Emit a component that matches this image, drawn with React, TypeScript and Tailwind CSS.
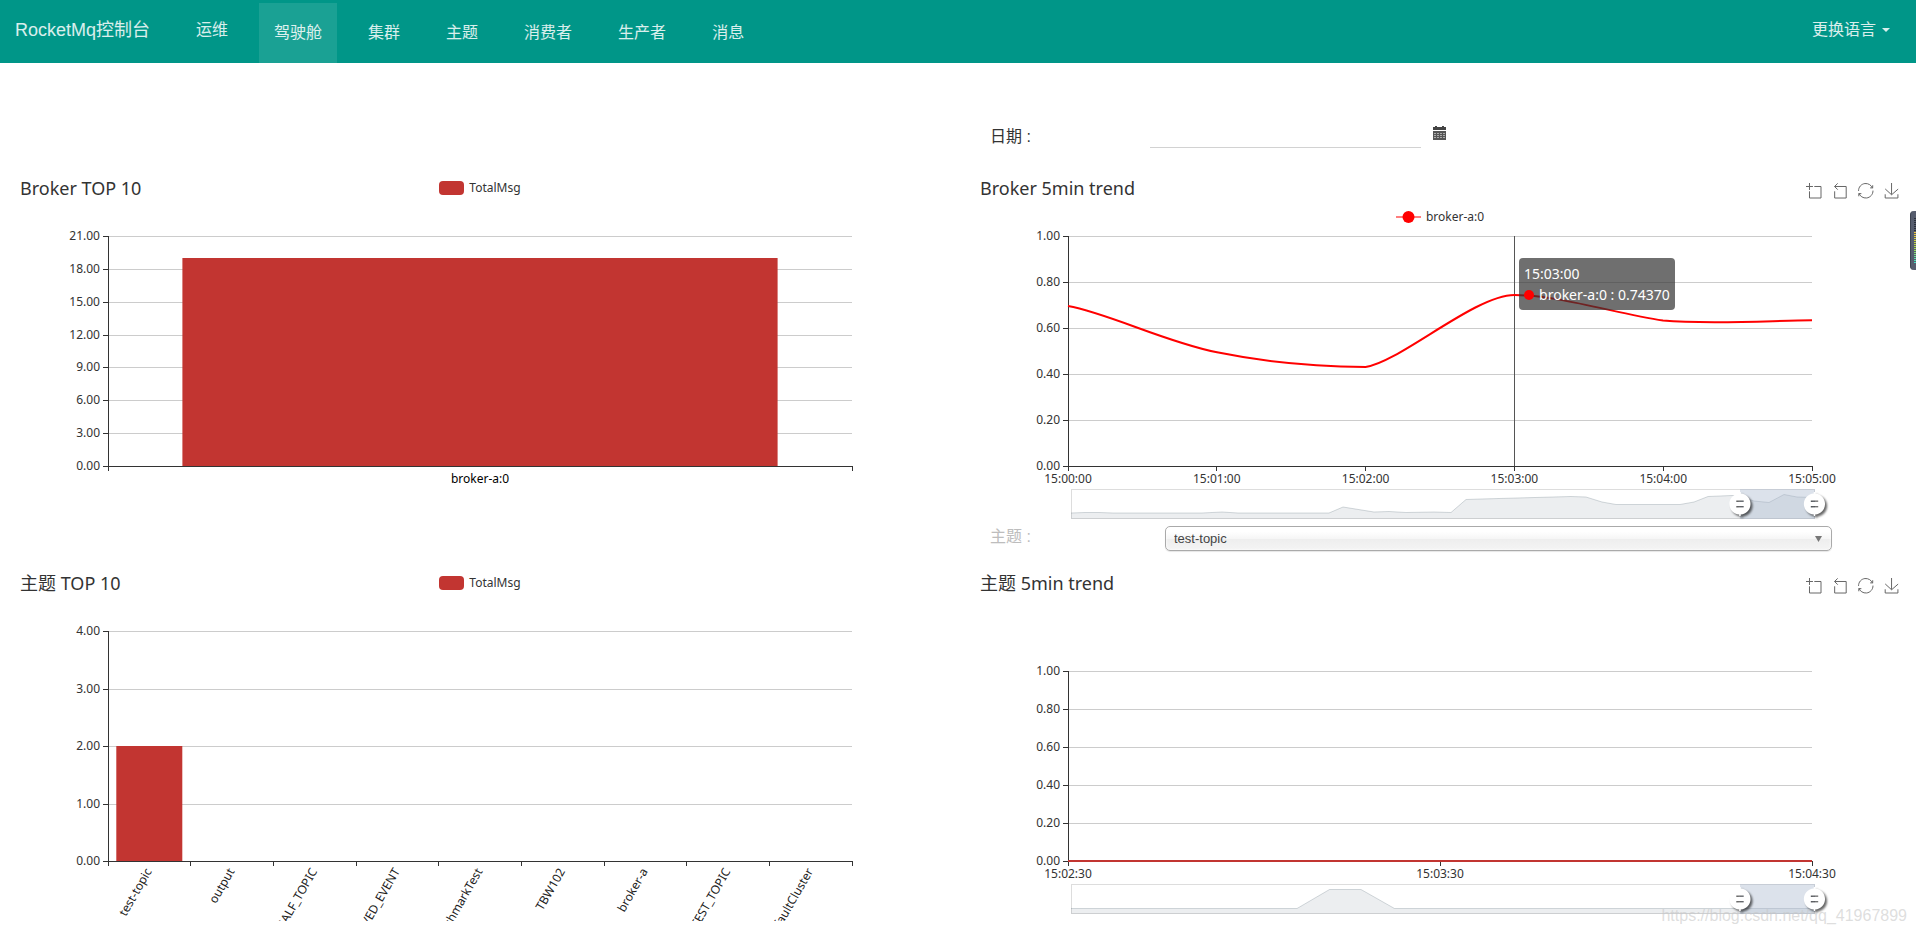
import type { ReactNode } from "react";

const chartFont = "font-['Noto_Sans','Noto_Sans_CJK_SC',sans-serif]";

const NAV = ["驾驶舱", "集群", "主题", "消费者", "生产者", "消息"];

const TOOLS = [
    { label: "区域缩放", d: "M0,13.5h26.9 M13.5,26.9V0 M32.1,13.5H58V58H13.5 V32.1" },
    { label: "缩放还原", d: "M22,1.4L9.9,13.5l12.3,12.3 M10.3,13.5H54.9v44.6 H10.3v-26" },
    {
        label: "还原",
        d: "M47,18.9h9.8V8.7 M56.3,20.1 C52.1,9,40.5,0.6,26.8,2.1C12.6,3.7,1.6,16.2,2.1,30.6 M13,41.1H3.1v10.2 M3.7,39.9c4.2,11.1,15.8,19.5,29.5,18 c14.2-1.6,25.2-14.1,24.7-28.5",
    },
    { label: "保存为图片", d: "M4.7,22.9L29.3,45.5L54.7,23.4M4.6,43.6L4.6,58L53.8,58L53.8,43.6M29.2,45.1L29.2,0" },
];

// plot area inside the 930 x 350 chart, the drawing starts below the 50px header
const LEFT = 93;
const RIGHT = 837;
const BOTTOM = 290;

const TOPICS = [
    "test-topic",
    "output",
    "RMQ_SYS_TRANS_HALF_TOPIC",
    "OFFSET_MOVED_EVENT",
    "BenchmarkTest",
    "TBW102",
    "broker-a",
    "SELF_TEST_TOPIC",
    "DefaultCluster",
];

function Toolbox() {
    return (
        <div className="flex gap-[11px] pt-[7px] pr-[6px]">
            {TOOLS.map((tool) => (
                <button key={tool.label} type="button" aria-label={tool.label} className="h-[15px] w-[15px] cursor-pointer">
                    <svg viewBox="0 0 58 58" className="block h-full w-full overflow-visible" fill="none" stroke="#666">
                        <path d={tool.d} vectorEffect="non-scaling-stroke" />
                    </svg>
                </button>
            ))}
        </div>
    );
}

function BarLegend() {
    return (
        <div className="flex h-[24px] items-center gap-[5px] text-xs text-[#333]">
            <span className="h-[14px] w-[25px] rounded-[4px] bg-[#c23531]" />
            TotalMsg
        </div>
    );
}

function LineLegend() {
    return (
        <div className="flex items-center justify-center gap-[5px] pt-[3px] text-xs text-[#333]">
            <svg width="25" height="14" viewBox="0 0 25 14">
                <path d="M0 7H25" stroke="#ff0000" strokeWidth="2" opacity="0.5" />
                <circle cx="12.5" cy="7" r="6" fill="#ff0000" />
            </svg>
            broker-a:0
        </div>
    );
}

type ChartProps = {
    title: string;
    legend?: ReactNode;
    subLegend?: ReactNode;
    tools?: boolean;
    overlay?: ReactNode;
    children: ReactNode;
};

function Chart({ title, legend, subLegend, tools, overlay, children }: ChartProps) {
    return (
        <section className={`min-w-0 ${chartFont}`}>
            <div className="grid h-[30px] grid-cols-3 items-start">
                <h2 className="pl-[5px] text-lg leading-6 whitespace-nowrap text-[#333]">{title}</h2>
                <div className="flex justify-center">{legend}</div>
                <div className="flex justify-end">{tools && <Toolbox />}</div>
            </div>
            <div className="h-[20px]">{subLegend}</div>
            <div className="relative">
                <svg viewBox="0 50 930 300" className="block h-auto w-full" fontSize="12">
                    {children}
                </svg>
                {overlay}
            </div>
        </section>
    );
}

function YAxis({ top, max, step }: { top: number; max: number; step: number }) {
    const count = Math.round(max / step);
    const ticks = Array.from({ length: count + 1 }, (_, i) => i);
    return (
        <g>
            {ticks.map((i) => {
                const y = Math.round(BOTTOM - ((BOTTOM - top) * i) / count) + 0.5;
                return (
                    <g key={i}>
                        <path d={`M${LEFT} ${y}H${RIGHT}`} stroke="#ccc" />
                        <path d={`M${LEFT - 5} ${y}H${LEFT}`} stroke="#333" />
                        <text x={LEFT - 8} y={y + 3} textAnchor="end" fill="#333">
                            {(i * step).toFixed(2)}
                        </text>
                    </g>
                );
            })}
            <path d={`M${LEFT + 0.5} ${top}V${BOTTOM + 1}`} stroke="#333" />
        </g>
    );
}

function XAxis({ ticks }: { ticks: number }) {
    return (
        <g stroke="#333">
            <path d={`M${LEFT} ${BOTTOM + 0.5}H${RIGHT + 1}`} />
            {Array.from({ length: ticks + 1 }, (_, i) => {
                const x = Math.floor(LEFT + ((RIGHT - LEFT) * i) / ticks) + 0.5;
                return <path key={i} d={`M${x} ${BOTTOM}v5`} />;
            })}
        </g>
    );
}

function TimeLabels({ labels }: { labels: string[] }) {
    return (
        <g fill="#333" textAnchor="middle">
            {labels.map((label, i) => (
                <text key={label} x={LEFT + ((RIGHT - LEFT) * i) / (labels.length - 1)} y={BOTTOM + 17}>
                    {label}
                </text>
            ))}
        </g>
    );
}

function DataZoom({ points }: { points: string }) {
    return (
        <g>
            <rect x="96.5" y="313.5" width="743" height="29" fill="#fff" stroke="#ddd" />
            <polygon points={`96,343 ${points} 840,343`} fill="#2f4554" fillOpacity="0.09" />
            <polyline points={points} fill="none" stroke="#2f4554" strokeOpacity="0.2" />
            <rect x="765" y="313" width="75" height="30" fill="#a7b7cc" fillOpacity="0.4" />
            {[765, 839.5].map((x) => (
                <g key={x} className="drop-shadow-[2px_2px_1px_rgba(0,0,0,0.6)]">
                    <path
                        transform={`translate(${x} 328) scale(1.12) translate(-10 -21.3)`}
                        fill="#fff"
                        d="M10.7,11.9v-1.3H9.3v1.3c-4.9,0.3-8.8,4.4-8.8,9.4c0,5,3.9,9.1,8.8,9.4v1.3h1.3v-1.3c4.9-0.3,8.8-4.4,8.8-9.4C19.5,16.3,15.6,12.2,10.7,11.9z M13.3,24.4H6.7V23h6.6V24.4z M13.3,19.6H6.7v-1.4h6.6V19.6z"
                    />
                </g>
            ))}
        </g>
    );
}

function Tooltip() {
    return (
        <div className="absolute top-[32px] left-[58.5%] rounded bg-[rgba(50,50,50,0.7)] p-[5px] text-sm leading-[21px] whitespace-nowrap text-white">
            <div>15:03:00</div>
            <div className="flex items-center gap-[5px]">
                <span className="h-[10px] w-[10px] rounded-full bg-[#ff0000]" />
                broker-a:0 : 0.74370
            </div>
        </div>
    );
}

function Navbar() {
    return (
        <header className="flex h-[63px] items-start justify-between bg-[#009688] pr-[26px] pl-[15px] text-base text-white/85">
            <div className="flex items-start">
                <a href="#" className="flex h-[60px] items-center text-lg whitespace-nowrap">RocketMq控制台</a>
                <nav className="ml-[31px] flex items-start gap-[16px] whitespace-nowrap">
                    <a href="#ops" className="flex h-[60px] items-center px-[15px]">运维</a>
                    <ul className="flex gap-[16px] pt-[3px]">
                        {NAV.map((item, i) => (
                            <li key={item}>
                                <a
                                    href={`#${item}`}
                                    className={`flex h-[60px] items-center px-[15px] ${i === 0 ? "bg-white/10" : ""}`}
                                >
                                    {item}
                                </a>
                            </li>
                        ))}
                    </ul>
                </nav>
            </div>
            <button type="button" className="flex h-[60px] cursor-pointer items-center gap-[6px] whitespace-nowrap">
                更换语言
                <svg width="8" height="4" viewBox="0 0 8 4" fill="currentColor">
                    <path d="M0 0H8L4 4Z" />
                </svg>
            </button>
        </header>
    );
}

function DateField() {
    return (
        <div className="flex h-[113px] items-start pt-[57px] pl-[15px]">
            <label htmlFor="date" className="w-[160px] leading-[34px] text-[#333]">日期 :</label>
            <input id="date" type="text" className="h-[28px] w-[271px] border-b border-[#d2d2d2] bg-transparent outline-none" />
            <button type="button" aria-label="选择日期" className="ml-[12px] pt-[6px]">
                <svg width="13" height="14" viewBox="0 0 13 14">
                    <path d="M0 1H2V0H4V1H9V0H11V1H13V4H0Z" fill="#444" />
                    <path d="M0 5H13V14H0Z" fill="#555" />
                    <path d="M1 7.5H12M1 9.5H12M1 11.5H12" stroke="#aaa" strokeDasharray="2 1" />
                </svg>
            </button>
        </div>
    );
}

function TopicField() {
    return (
        <div className="flex h-[45px] items-start pr-[73px] pl-[15px]">
            <label htmlFor="topic" className="w-[175px] leading-[22px] text-[#bdbdbd]">主题 :</label>
            <div className="relative flex-1">
                <select
                    id="topic"
                    className="block h-[25px] w-full appearance-none rounded-[5px] border border-[#aaa] bg-[linear-gradient(#fff_20%,#f6f6f6_50%,#eee_52%,#f4f4f4_100%)] pl-2 text-[13px] text-[#444] shadow-[0_0_3px_#fff_inset,0_1px_1px_rgba(0,0,0,0.1)]"
                >
                    <option>test-topic</option>
                </select>
                <svg width="7" height="6" viewBox="0 0 7 6" className="pointer-events-none absolute top-[10px] right-[10px]" fill="#777">
                    <path d="M0 0H7L3.5 6Z" />
                </svg>
            </div>
        </div>
    );
}

function SideMeter() {
    return (
        <div className="fixed top-[211px] right-0 flex h-[59px] w-[6px] flex-col justify-center rounded-l border-l border-[#3d4350] bg-[#565d6e] pl-[3px]">
            <span className="h-[14px] bg-[repeating-linear-gradient(#2b303b_0_1px,#565d6e_1px_2px)]" />
            <span className="h-[32px] bg-[repeating-linear-gradient(transparent_0_1px,#565d6e_1px_2px),linear-gradient(#f5c63c,#a5dc4a_50%,#35e0d0)]" />
        </div>
    );
}

export default function App() {
    const band = (RIGHT - LEFT) / TOPICS.length;

    return (
        <div className="relative min-h-screen bg-white pb-[13px] font-['Liberation_Sans','Noto_Sans_CJK_SC',sans-serif]">
            <Navbar />
            <main className="grid grid-cols-2 gap-x-[30px] pr-[11px] pl-[15px]">
                <div />
                <DateField />

                <Chart title="Broker TOP 10" legend={<BarLegend />}>
                    <YAxis top={60} max={21} step={3} />
                    <rect x="167.4" y="82" width="595.2" height="208" fill="#c23531" />
                    <XAxis ticks={1} />
                    <text x="465" y="307" textAnchor="middle" fill="#000">broker-a:0</text>
                </Chart>

                <Chart title="Broker 5min trend" subLegend={<LineLegend />} tools overlay={<Tooltip />}>
                    <YAxis top={60} max={1} step={0.2} />
                    <XAxis ticks={5} />
                    <TimeLabels labels={["15:00:00", "15:01:00", "15:02:00", "15:03:00", "15:04:00", "15:05:00"]} />
                    <path d="M539.5 60V290" stroke="#555" />
                    <path
                        d="M93 130C133 137 190 166 242 176.3C294 187 345 190.5 390.6 191C425 186 500 119 539.4 119C583 119 643 138 688 144.5C733 148.5 788 145 837 144.2"
                        fill="none"
                        stroke="#ff0000"
                        strokeWidth="2"
                    />
                    <DataZoom points="96,337 110,336.5 124,336.5 138,337 227,337 247,336 263,337 354,337 368,331 399,336 414,335.5 431,336.5 459,336 476,336.5 491,323.5 506,323 596,320.5 611,321 627,326 641,328.5 705,328.5 719,326 733,320.5 757,319.5 763,319.5 779,325 794,326.5 809,318.5 822,321 840,321.5" />
                </Chart>

                <div />
                <TopicField />

                <Chart title="主题 TOP 10" legend={<BarLegend />}>
                    <YAxis top={60} max={4} step={1} />
                    <rect x="101.3" y="175" width="66" height="115" fill="#c23531" />
                    <XAxis ticks={TOPICS.length} />
                    {TOPICS.map((topic, i) => {
                        const x = LEFT + band * (i + 0.5) - 1;
                        return (
                            <text
                                key={topic}
                                x={x}
                                y="298"
                                transform={`rotate(-60 ${x} 298)`}
                                textAnchor="end"
                                dominantBaseline="central"
                                fill="#222"
                            >
                                {topic}
                            </text>
                        );
                    })}
                </Chart>

                <Chart title="主题 5min trend" tools>
                    <YAxis top={100} max={1} step={0.2} />
                    <XAxis ticks={2} />
                    <TimeLabels labels={["15:02:30", "15:03:30", "15:04:30"]} />
                    <path d="M93 290H837" stroke="#c23531" strokeWidth="2" />
                    <DataZoom points="96,337.5 322,337.5 354.5,318.5 386,318.5 419.5,337.5 840,337.5" />
                </Chart>
            </main>
            <SideMeter />
            <div className="pointer-events-none absolute right-[9px] bottom-[6px] text-base text-[#c8c8c8]/60">
                https://blog.csdn.net/qq_41967899
            </div>
        </div>
    );
}
